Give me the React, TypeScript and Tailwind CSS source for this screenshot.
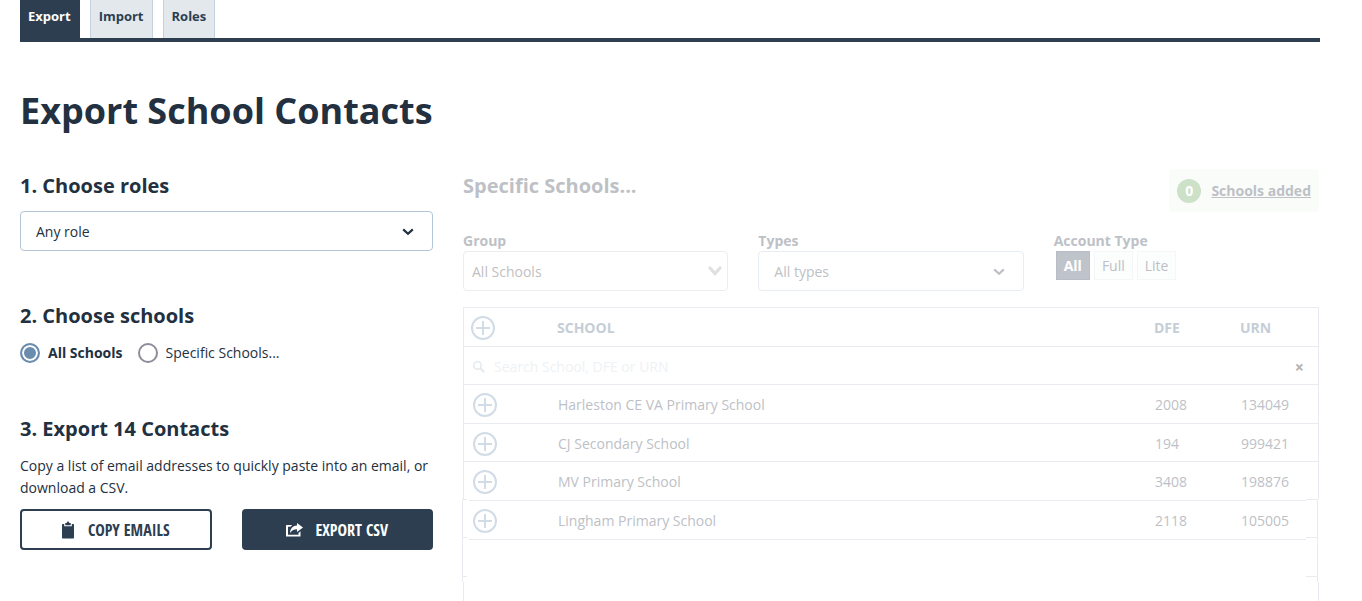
import type { ReactNode } from 'react'

interface School {
  name: string
  dfe: string
  urn: string
}

const TABS = ['Export', 'Import', 'Roles']

const SCHOOLS: School[] = [
  { name: 'Harleston CE VA Primary School', dfe: '2008', urn: '134049' },
  { name: 'CJ Secondary School', dfe: '194', urn: '999421' },
  { name: 'MV Primary School', dfe: '3408', urn: '198876' },
  { name: 'Lingham Primary School', dfe: '2118', urn: '105005' },
]

function Chevron({ className }: { className: string }) {
  return (
    <svg viewBox="0 0 12 8" className={className} fill="none" stroke="currentColor" aria-hidden="true">
      <path d="M1.2 1.4 6 5.8l4.8-4.4" strokeWidth="2.2" />
    </svg>
  )
}

function ClipboardIcon() {
  return (
    <svg viewBox="0 0 12 18" className="w-3 h-[18px]" fill="currentColor" aria-hidden="true">
      <path d="M.8 3h1.400v2.200h7.600V3h1.400c.5 0 .8.4.8 1v12.500c0 .6-.4 1-1 1H1c-.6 0-1-.4-1-1V4c0-.6.300-1 .8-1z" />
      <path d="M3.300 2h1.500C4.900 1 5.300.5 6 .5S7.100 1 7.200 2h1.500v2.200H3.300z" />
    </svg>
  )
}

function ShareIcon() {
  return (
    <svg viewBox="0 0 17 14" className="w-[17px] h-3.5" fill="currentColor" aria-hidden="true">
      <path d="M1 2h5.200L4.500 3.800H2v8h10.500V10l2-1.800v5.300H0V3c0-.6.400-1 1-1z" />
      <path d="M11 0l6 4.500-6 4.500V6.300C8 6.300 6 7.200 4 10c.2-4.500 3-7.200 7-7.400z" />
    </svg>
  )
}

function AddButton({ label }: { label: string }) {
  return (
    <button type="button" aria-label={label} className="block size-6 text-[#d2dce7]">
      <svg viewBox="0 0 24 24" className="size-6" fill="none" stroke="currentColor" strokeWidth="2">
        <circle cx="12" cy="12" r="11" />
        <path d="M12 5v14M5 12h14" />
      </svg>
    </button>
  )
}

function Heading({ children, muted = false }: { children: ReactNode; muted?: boolean }) {
  return (
    <h2 className={`text-xl leading-7 font-bold ${muted ? 'text-[#bdc1c6]' : 'text-[#223040]'}`}>
      {children}
    </h2>
  )
}

function SchoolTable() {
  return (
    <div className="-ml-px mt-4 flex flex-1">
      {/* Left rail */}
      <div aria-hidden="true" className="flex flex-col shrink-0 w-[7px] *:border-[#e8ecf0] *:border-l">
        <div className="ml-px h-10 border-y" />
        <div className="ml-px h-[38px] border-b" />
        <div className="ml-px h-[39px] border-b" />
        <div className="ml-px h-[38px] border-b" />
        <div className="ml-px h-[37px]" />
        <div className="mr-0.5 h-[38px] border-t" />
        <div className="mr-0.5 h-[39px] border-t" />
        <div className="mr-0.5 h-1.5 border-t" />
        <div className="ml-px flex-1" />
      </div>

      <table className="flex-1 self-start border-collapse text-sm text-left text-[#bdc1c6] table-fixed w-full">
        <thead>
          <tr className="h-[39px] border-y border-[#e8ecf0] text-[#c5ced6]">
            <th className="w-[88px] p-0 pt-px pl-0.5"><AddButton label="Add all schools" /></th>
            <th className="p-0 pt-px">SCHOOL</th>
            <th className="w-[86px] p-0 pt-px">DFE</th>
            <th className="w-[66px] p-0 pt-px">URN</th>
          </tr>
        </thead>
        <tbody>
          <tr className="h-[38px] border-b border-[#e8ecf0]">
            <td colSpan={4} className="p-0 pt-0.5">
              <div className="flex items-center pl-1 pr-0.5">
                <svg viewBox="0 0 12 12" className="size-3 text-[#e3e9ef]" fill="none" stroke="currentColor" aria-hidden="true">
                  <circle cx="4.500" cy="4.500" r="3.700" strokeWidth="1.500" />
                  <path d="M7.300 7.300l4 4" strokeWidth="2" />
                </svg>
                <input
                  type="text"
                  aria-label="Search schools"
                  placeholder="Search School, DFE or URN"
                  className="ml-[9px] flex-1 bg-transparent outline-none placeholder:text-[#eef2f5]"
                />
                <button type="button" aria-label="Clear search" className="text-base leading-5 font-bold text-[#b3b3b3]">×</button>
              </div>
            </td>
          </tr>
          {SCHOOLS.map((school, i) => (
            <tr key={school.urn} className={`border-b border-[#e8ecf0] ${i === 1 ? 'h-[38px]' : 'h-[39px]'}`}>
              <td className="p-0 pt-0.5 pl-1"><AddButton label={`Add ${school.name}`} /></td>
              <td className="p-0 pt-0.5 pl-px">{school.name}</td>
              <td className="p-0 pt-0.5 pl-px">{school.dfe}</td>
              <td className="p-0 pt-0.5 pl-px">{school.urn}</td>
            </tr>
          ))}
        </tbody>
      </table>

      {/* Right rail */}
      <div aria-hidden="true" className="flex flex-col shrink-0 w-[13px] *:border-[#e8ecf0] *:border-r">
        <div className="h-10 border-y" />
        <div className="h-[38px] border-b" />
        <div className="h-[39px] border-b" />
        <div className="h-[38px] border-b" />
        <div className="h-[37px]" />
        <div className="mr-px h-[38px] border-t" />
        <div className="mr-px h-[39px] border-t" />
        <div className="mr-px h-1.5 border-t" />
        <div className="flex-1" />
      </div>
    </div>
  )
}

export default function App() {
  return (
    <div className="min-h-screen flex flex-col bg-white pl-5 pr-[42px] font-['Open_Sans',sans-serif] text-sm text-[#223040]">
      <nav className="flex gap-2.5 border-b-4 border-[#2c3e50] text-[13px] font-bold">
        {TABS.map((tab, i) => (
          <a
            key={tab}
            href={`#${tab.toLowerCase()}`}
            className={`h-[38px] px-2 pt-1.5 leading-5 ${
              i === 0
                ? 'border-r border-[#2c3e50] bg-[#2c3e50] text-white'
                : 'border-x border-[#c3d2de] bg-[#e2e8ec] text-[#2c3e50]'
            }`}
          >
            {tab}
          </a>
        ))}
      </nav>

      <h1 className="mt-11 text-4xl leading-[50px] font-bold">Export School Contacts</h1>

      <div className="mt-9 flex-1 grid grid-cols-[413fr_857fr] gap-[30px]">
        <section>
          <Heading>1. Choose roles</Heading>
          <div className="relative mt-[11px]">
            <select
              aria-label="Role"
              className="w-full h-10 appearance-none rounded border border-[#b3c5d7] bg-white px-[15px] pt-0.5 text-sm"
            >
              <option>Any role</option>
            </select>
            <Chevron className="pointer-events-none absolute right-[19px] top-[17px] w-3 h-2" />
          </div>

          <div className="mt-[51px]">
            <Heading>2. Choose schools</Heading>
            <div className="mt-[13px] flex items-center gap-[15px]">
              <label className="flex items-center gap-2 font-bold">
                <input
                  type="radio"
                  name="schools"
                  defaultChecked
                  className="size-5 appearance-none rounded-full border-2 border-[#8f8c9c] checked:border-[#6a8caf] checked:bg-[#6a8caf] checked:shadow-[inset_0_0_0_2px_#fff]"
                />
                All Schools
              </label>
              <label className="flex items-center gap-2">
                <input
                  type="radio"
                  name="schools"
                  className="size-5 appearance-none rounded-full border-2 border-[#8f8c9c] checked:border-[#6a8caf] checked:bg-[#6a8caf] checked:shadow-[inset_0_0_0_2px_#fff]"
                />
                Specific Schools...
              </label>
            </div>
          </div>

          <div className="mt-[52px]">
            <Heading>3. Export 14 Contacts</Heading>
            <p className="mt-3 leading-[22px]">
              Copy a list of email addresses to quickly paste into an email, or download a CSV.
            </p>
            <div className="mt-2.5 grid grid-cols-2 gap-[30px] font-['Open_Sans_Condensed','Liberation_Sans_Narrow',sans-serif] text-base font-bold">
              <button
                type="button"
                className="flex h-[41px] items-center justify-center gap-3.5 rounded-sm border-2 border-[#2c3e50] text-[#2c3e50]"
              >
                <ClipboardIcon />
                COPY EMAILS
              </button>
              <button
                type="button"
                className="flex h-[41px] items-center justify-center gap-3 rounded-sm bg-[#2c3e50] text-white"
              >
                <ShareIcon />
                EXPORT CSV
              </button>
            </div>
          </div>
        </section>

        <section className="flex flex-col pr-px text-[#bdc1c6]">
          <div className="-mt-[3px] flex h-[43px] items-start justify-between">
            <div className="pt-[3px]">
              <Heading muted>Specific Schools...</Heading>
            </div>
            <a href="#added" className="flex h-[43px] items-center gap-2.5 rounded bg-[#fafcfa] px-2 font-bold">
              <span className="flex size-6 items-center justify-center rounded-full bg-[#cde0c8] text-white">0</span>
              <span className="underline">Schools added</span>
            </a>
          </div>

          <div className="mt-[19px] grid grid-cols-3 gap-[30px]">
            <div>
              <label htmlFor="group" className="block leading-5 font-bold">Group</label>
              <div className="relative">
                <select
                  id="group"
                  className="w-full h-10 appearance-none rounded border border-[#ededed] bg-white px-2 pt-0.5 text-sm text-[#bfbfbf]"
                >
                  <option>All Schools</option>
                </select>
                <svg viewBox="0 0 14 10" className="pointer-events-none absolute right-1.5 top-[15px] w-3.5 h-2.5 text-[#e0e0e0]" fill="none" stroke="currentColor" aria-hidden="true">
                  <path d="M2 2l5 5.500L12 2" strokeWidth="3.200" strokeLinecap="round" />
                </svg>
              </div>
            </div>
            <div>
              <label htmlFor="types" className="block leading-5 font-bold">Types</label>
              <div className="relative">
                <select
                  id="types"
                  className="w-full h-10 appearance-none rounded border border-[#e8edf3] bg-white px-[15px] pt-0.5 text-sm"
                >
                  <option>All types</option>
                </select>
                <Chevron className="pointer-events-none absolute right-[19px] top-[17px] w-3 h-2" />
              </div>
            </div>
            <div role="group" aria-labelledby="account-type">
              <span id="account-type" className="block leading-5 font-bold">Account Type</span>
              <div className="flex gap-1 pl-0.5">
                <button type="button" className="h-[29px] border border-[#b8bdc5] bg-[#bfc4cb] px-[7px] font-bold text-white">All</button>
                <button type="button" className="h-[29px] border border-[#f5f6f7] bg-[#fcfdfd] px-[7px]">Full</button>
                <button type="button" className="h-[29px] border border-[#f5f6f7] bg-[#fcfdfd] px-[7px]">Lite</button>
              </div>
            </div>
          </div>

          <SchoolTable />
        </section>
      </div>
    </div>
  )
}
